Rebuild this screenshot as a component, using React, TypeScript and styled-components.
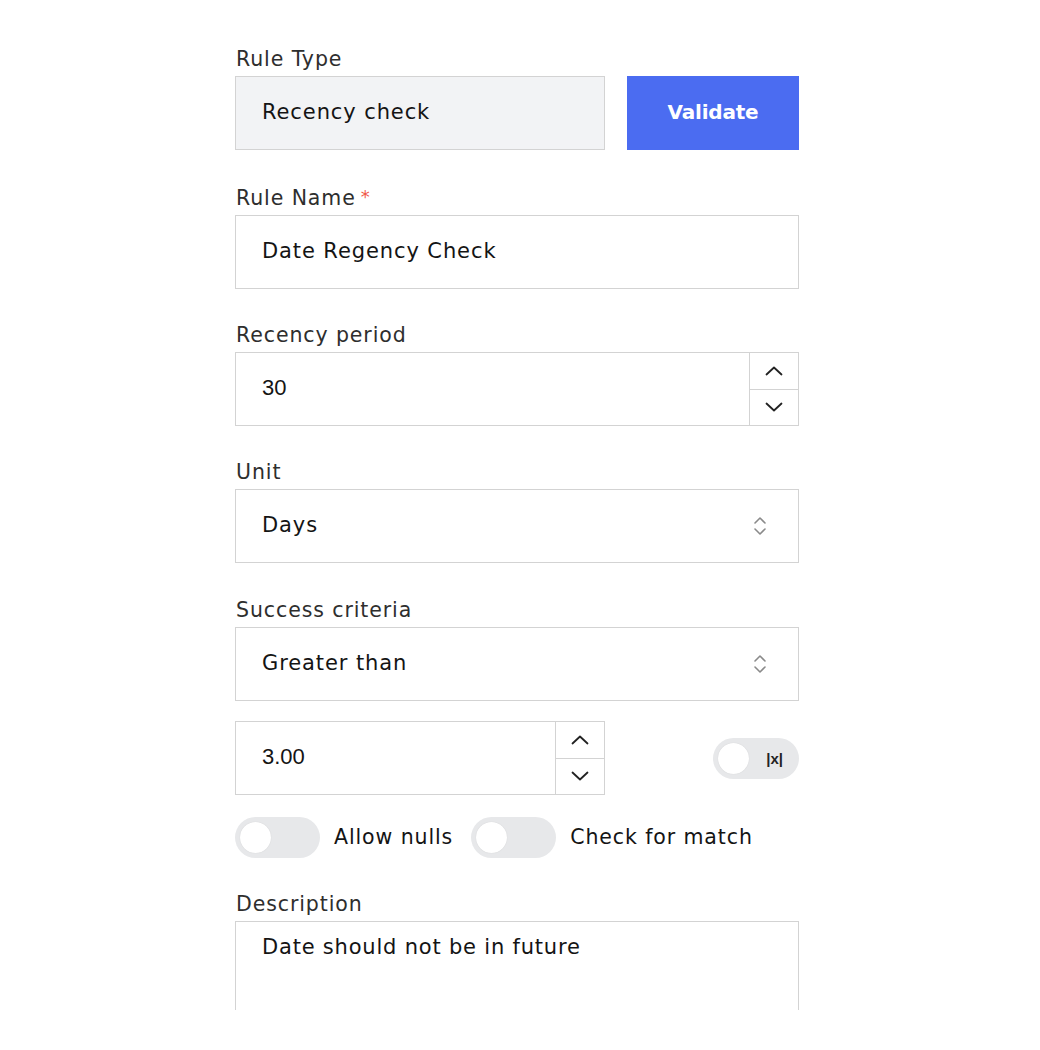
import React from "react";
import styled, { createGlobalStyle } from "styled-components";

const Global = createGlobalStyle`
  html, body { margin: 0; padding: 0; background: #ffffff; }
  body { font-family: "DejaVu Sans", "Liberation Sans", sans-serif; }
  * { box-sizing: border-box; }
`;

const Page = styled.div`
  width: 1040px;
  height: 1050px;
  background: #fff;
  padding: 45px 0 0 235px;
`;

const Form = styled.div`
  width: 564px;
  height: 965px;
  overflow: hidden;
  display: flex;
  flex-direction: column;
`;

const Group = styled.div<{ $gap?: number }>`
  display: flex;
  flex-direction: column;
  margin-bottom: ${(p) => (p.$gap ?? 32)}px;
`;

const Label = styled.div`
  height: 28px;
  font-size: 20.5px;
  line-height: 28px;
  letter-spacing: 0.9px;
  color: #2e2e2e;
  margin-bottom: 3px;
  padding-left: 1px;
  white-space: nowrap;
`;

const Star = styled.span`
  position: relative;
  top: -2px;
  color: #f0584a;
  margin-left: 5px;
  font-size: 18px;
`;

const Row = styled.div<{ $gap?: number }>`
  display: flex;
  align-items: center;
  gap: ${(p) => p.$gap ?? 22}px;
`;

const Field = styled.div<{ $width?: number; $muted?: boolean }>`
  position: relative;
  display: flex;
  align-items: stretch;
  height: 74px;
  width: ${(p) => (p.$width ? `${p.$width}px` : "100%")};
  border: 1.5px solid #d3d3d3;
  background: ${(p) => (p.$muted ? "#f2f3f5" : "#ffffff")};
`;

const Value = styled.div<{ $mono?: boolean }>`
  flex: 1;
  display: flex;
  align-items: center;
  padding: 0 0 3px 26px;
  font-size: ${(p) => (p.$mono ? 22 : 21)}px;
  letter-spacing: ${(p) => (p.$mono ? 0 : 0.9)}px;
  color: #141414;
  font-family: ${(p) => (p.$mono ? `"Liberation Sans", Arial, sans-serif` : "inherit")};
`;

const Spinner = styled.div`
  width: 49px;
  display: flex;
  flex-direction: column;
  border-left: 1.5px solid #d3d3d3;
`;

const SpinBtn = styled.div<{ $top?: boolean }>`
  flex: 1;
  display: flex;
  align-items: center;
  justify-content: center;
  border-top: ${(p) => (p.$top ? "none" : "1.5px solid #d3d3d3")};
`;

const SelectIcon = styled.div`
  width: 76px;
  display: flex;
  align-items: center;
  justify-content: center;
`;

const Button = styled.button`
  width: 172px;
  height: 74px;
  border: none;
  background: #4b6cf1;
  color: #ffffff;
  font-family: inherit;
  font-weight: 700;
  font-size: 20px;
  letter-spacing: -0.2px;
  padding-bottom: 4px;
`;

const Track = styled.div<{ $width?: number }>`
  position: relative;
  width: ${(p) => p.$width ?? 85}px;
  height: 41px;
  border-radius: 21px;
  background: #e7e8ea;
  display: flex;
  align-items: center;
  flex-shrink: 0;
`;

const Knob = styled.div`
  width: 31px;
  height: 31px;
  border-radius: 50%;
  background: #ffffff;
  margin-left: 5px;
  box-shadow: 0 0 1px rgba(0, 0, 0, 0.15);
`;

const TrackText = styled.span`
  margin-left: auto;
  margin-right: 16px;
  font-family: "Liberation Sans", Arial, sans-serif;
  font-weight: 700;
  font-size: 15px;
  color: #222;
`;

const ToggleLabel = styled.span<{ $last?: boolean }>`
  font-size: 20.5px;
  letter-spacing: 0.9px;
  color: #141414;
  margin-left: 14px;
  margin-right: ${(p) => (p.$last ? 0 : 18)}px;
  padding-bottom: 2px;
`;

const Spacer = styled.div`
  flex: 1;
`;

const TextArea = styled.div`
  height: 140px;
  border: 1.5px solid #d3d3d3;
  padding: 13px 26px;
  font-size: 21px;
  letter-spacing: 0.8px;
  color: #141414;
`;

const Chevron = ({ up }: { up?: boolean }) => (
  <svg width="18" height="10" viewBox="0 0 18 10" fill="none">
    <path
      d={up ? "M1.5 8.5 L9 1.5 L16.5 8.5" : "M1.5 1.5 L9 8.5 L16.5 1.5"}
      stroke="#222"
      strokeWidth="1.8"
      strokeLinecap="round"
      strokeLinejoin="round"
    />
  </svg>
);

const UpDown = () => (
  <svg width="14" height="22" viewBox="0 0 14 22" fill="none">
    <path d="M2 8 L7 3 L12 8" stroke="#8a8a8a" strokeWidth="1.6" strokeLinecap="round" strokeLinejoin="round" />
    <path d="M2 14 L7 19 L12 14" stroke="#8a8a8a" strokeWidth="1.6" strokeLinecap="round" strokeLinejoin="round" />
  </svg>
);

const NumberField = ({ value, width }: { value: string; width?: number }) => (
  <Field $width={width}>
    <Value $mono>{value}</Value>
    <Spinner>
      <SpinBtn $top>
        <Chevron up />
      </SpinBtn>
      <SpinBtn>
        <Chevron />
      </SpinBtn>
    </Spinner>
  </Field>
);

const SelectField = ({ value }: { value: string }) => (
  <Field>
    <Value>{value}</Value>
    <SelectIcon>
      <UpDown />
    </SelectIcon>
  </Field>
);

export default function App() {
  return (
    <Page>
      <Global />
      <Form>
        <Group $gap={34}>
          <Label>Rule Type</Label>
          <Row>
            <Field $width={370} $muted>
              <Value>Recency check</Value>
            </Field>
            <Button>Validate</Button>
          </Row>
        </Group>
        <Group>
          <Label>
            Rule Name<Star>*</Star>
          </Label>
          <Field>
            <Value>Date Regency Check</Value>
          </Field>
        </Group>
        <Group>
          <Label>Recency period</Label>
          <NumberField value="30" />
        </Group>
        <Group $gap={33}>
          <Label>Unit</Label>
          <SelectField value="Days" />
        </Group>
        <Group $gap={20}>
          <Label>Success criteria</Label>
          <SelectField value="Greater than" />
        </Group>
        <Group $gap={22}>
          <Row>
            <NumberField value="3.00" width={370} />
            <Spacer />
            <Track $width={86}>
              <Knob />
              <TrackText>|x|</TrackText>
            </Track>
          </Row>
        </Group>
        <Group $gap={32}>
          <Row $gap={0}>
            <Track>
              <Knob />
            </Track>
            <ToggleLabel>Allow nulls</ToggleLabel>
            <Track>
              <Knob />
            </Track>
            <ToggleLabel $last>Check for match</ToggleLabel>
          </Row>
        </Group>
        <Group $gap={0}>
          <Label>Description</Label>
          <TextArea>Date should not be in future</TextArea>
        </Group>
      </Form>
    </Page>
  );
}
